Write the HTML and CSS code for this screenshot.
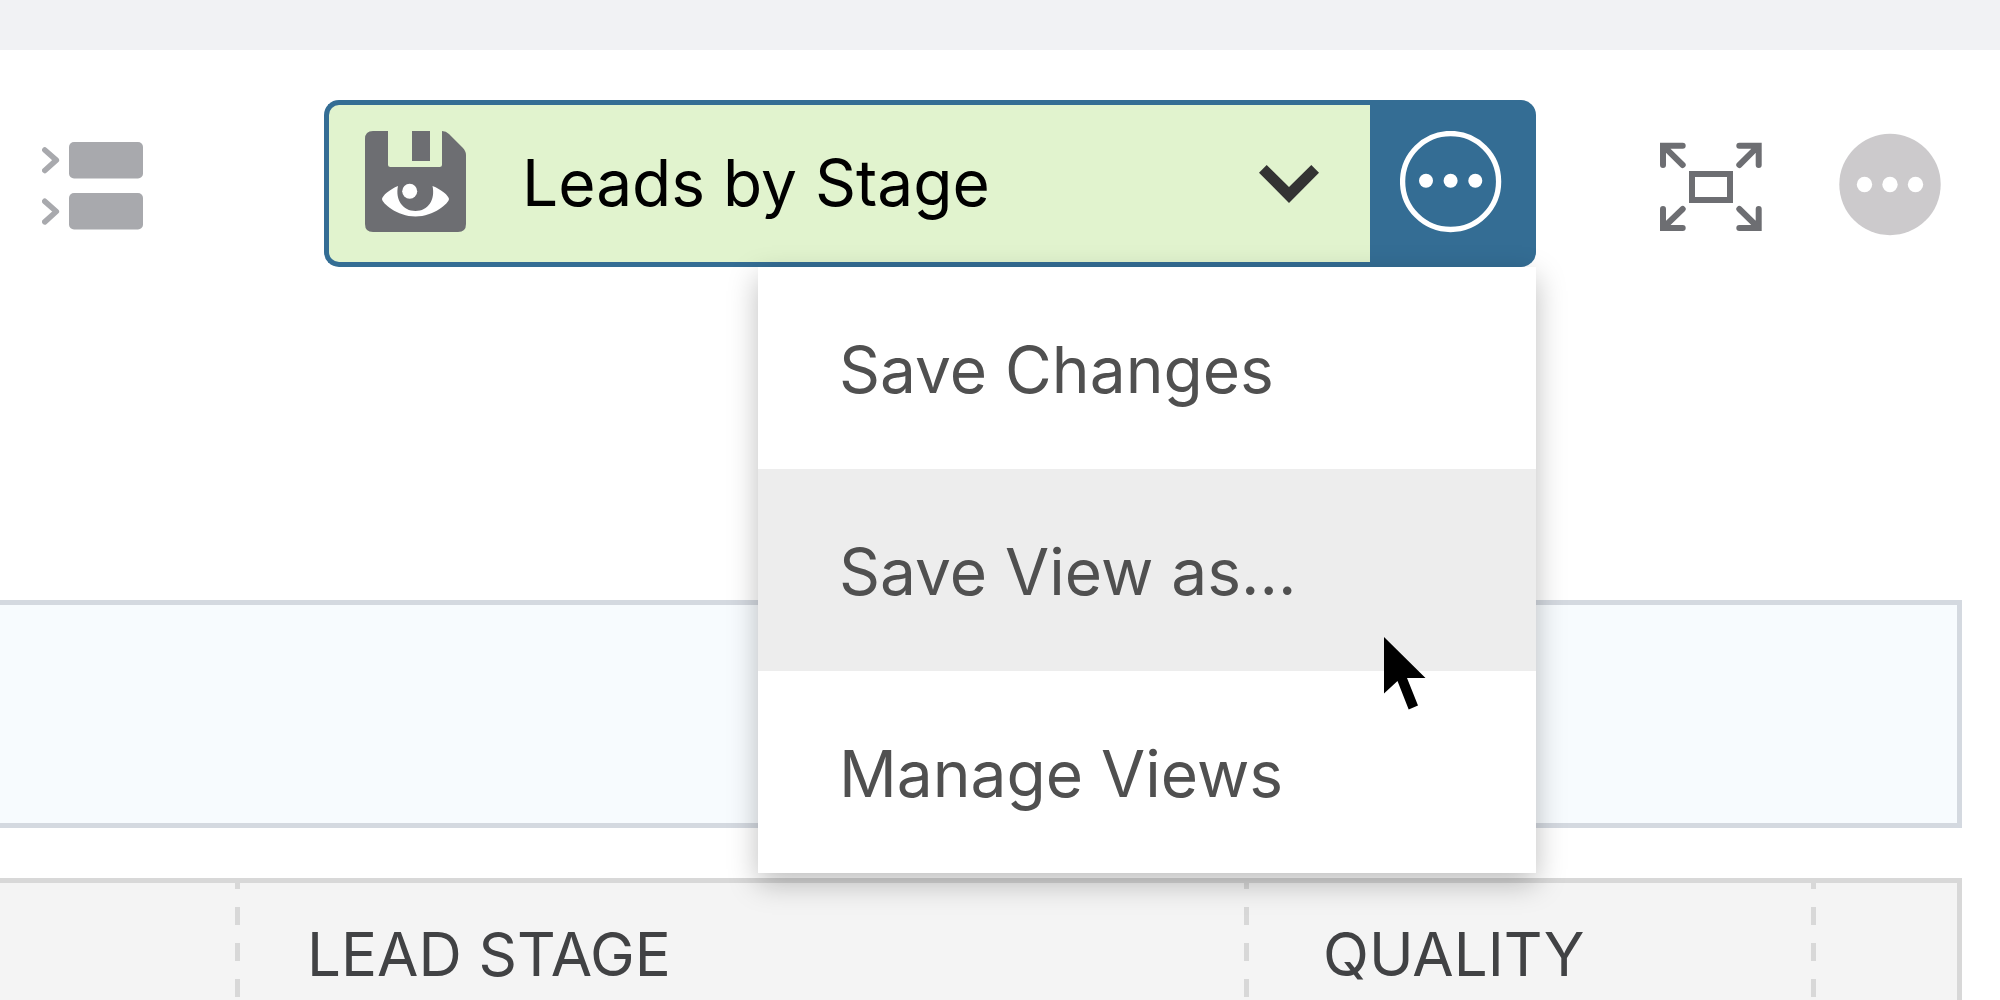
FILE: index.html
```html
<!DOCTYPE html>
<html lang="en">
<head>
<meta charset="utf-8">
<meta name="viewport" content="width=device-width, initial-scale=1">
<title>Leads by Stage</title>
<link rel="stylesheet" href="styles.css">
</head>
<body>
<div class="topbar"></div>
<header class="toolbar">
  <button class="tool" type="button" aria-label="Group rows">
    <svg width="102" height="105" viewBox="0 0 102 105">
      <g fill="#a8a9ad"><rect x="27" y="11" width="74" height="36.5" rx="5"/><rect x="27" y="62" width="74" height="36.5" rx="5"/></g>
      <g fill="none" stroke="#a8a9ad" stroke-width="5.6" stroke-linecap="round" stroke-linejoin="round"><path d="M2.8 19 14.3 29.200 2.800 39.500"/><path d="M2.800 70.300 14.300 80.500 2.800 90.800"/></g>
    </svg>
  </button>
  <div class="view">
    <button class="view-select" type="button" aria-haspopup="listbox">
      <svg width="101" height="106" viewBox="0 0 101 106">
        <path fill="#6d6e72" d="M8 0H23V33.500Q23 36 25.500 36H74.500Q77 36 77 33.500V0Q81 0 84 3L97.500 16.500Q101 20 101 24V93Q101 101 93 101H8Q0 101 0 93V8Q0 0 8 0ZM47 0H65V30H47Z"/>
        <path fill="#fff" d="M33 55C25 58 17 65 17 68C17 72 32 85.500 50.500 85.500S84 72 84 68C84 65 76 58 67.500 55C70.500 69 63 80 50.500 80S30 69 33 55Z"/>
        <circle cx="44.700" cy="60.300" r="7.500" fill="#fff"/>
      </svg>
      <span class="view-name">Leads by Stage</span>
      <svg width="60" height="38" viewBox="0 0 60 38"><path fill="#333" d="M0 7.700 7.700 0 30 22 52.300 0 60 7.700 30 38Z"/></svg>
    </button>
    <button class="view-more" type="button" aria-label="View options" aria-expanded="true">
      <svg width="102" height="106" viewBox="0 0 102 106">
        <circle cx="50.600" cy="50.500" r="48" fill="none" stroke="#fff" stroke-width="5.300"/>
        <g fill="#fff"><circle cx="26" cy="49.700" r="7"/><circle cx="50.600" cy="49.700" r="7"/><circle cx="75.300" cy="49.700" r="7"/></g>
      </svg>
    </button>
    <div class="menu" role="menu">
      <button class="menu-item" type="button" role="menuitem">Save Changes</button>
      <button class="menu-item active" type="button" role="menuitem">Save View as...</button>
      <button class="menu-item" type="button" role="menuitem">Manage Views</button>
      <svg class="cursor" width="42" height="73" viewBox="0 0 42 73"><path d="M0 0V56.500L13.500 44 24.700 72.500 34 68.500 23 41H41.500Z"/></svg>
    </div>
  </div>
  <button class="tool expand" type="button" aria-label="Full screen">
    <svg width="102" height="105" viewBox="0 0 102 105" fill="none" stroke="#6d6e72" stroke-width="6" stroke-linecap="round">
      <path d="M22.700 14.700H3V34M3.500 15.200 22.700 34M79.300 14.700H98.700V34M98.200 15.200 79.300 34M3 78V97H22.700M3.500 96.500 22.700 78M98.700 78V97H79.300M98.200 96.500 79.300 78"/>
      <rect x="32" y="43" width="38" height="26"/>
    </svg>
  </button>
  <button class="tool more" type="button" aria-label="More">
    <svg width="102" height="105" viewBox="0 0 102 105">
      <circle cx="51" cy="53.500" r="50.700" fill="#cccacc"/>
      <g fill="#fff"><circle cx="25.500" cy="53.500" r="7.700"/><circle cx="51" cy="53.500" r="7.700"/><circle cx="76.500" cy="53.500" r="7.700"/></g>
    </svg>
  </button>
</header>
<main class="content">
  <div class="band"></div>
  <table class="leads">
    <colgroup><col class="col-first"><col class="col-stage"><col class="col-quality"><col></colgroup>
    <thead><tr><th></th><th scope="col">LEAD STAGE</th><th class="quality" scope="col">QUALITY</th><th></th></tr></thead>
  </table>
</main>
</body>
</html>
```
FILE: styles.css
```css
* { box-sizing: border-box; }
body {
  margin: 0;
  min-height: 100vh;
  background: #fff;
  font-family: Inter, "Liberation Sans", sans-serif;
}
button {
  margin: 0;
  padding: 0;
  border: 0;
  background: none;
  color: inherit;
  font: inherit;
}
svg { display: block; flex: none; }

.topbar { height: 50px; background: #f1f2f4; }

.toolbar {
  display: flex;
  align-items: center;
  padding: 50px 59px 0 42px;
}
.tool { flex: none; }
.expand { margin-left: 124px; }
.more { margin-left: 77px; }

.view {
  position: relative;
  display: flex;
  flex: 1;
  height: 167px;
  margin-left: 180px;
}
.view-select {
  display: flex;
  flex: 1;
  align-items: center;
  padding: 0 51px 0 36px;
  border: 5px solid #346d94;
  border-right: 0;
  border-radius: 15px 0 0 15px;
  background: #e1f3ce;
  color: #000;
  font-size: 64px;
}
.view-name {
  flex: 1;
  padding: 0 0 2px 56px;
  text-align: left;
  white-space: nowrap;
}
.view-more {
  display: flex;
  align-items: center;
  width: 166px;
  padding-left: 30px;
  border-radius: 0 15px 15px 0;
  background: #346d94;
}

.menu {
  position: absolute;
  top: 100%;
  right: 0;
  width: 778px;
  background: #fff;
  box-shadow: 0 10px 28px rgba(0, 0, 0, 0.26);
}
.menu-item {
  display: block;
  width: 100%;
  height: 202px;
  padding: 2px 81px 0;
  color: #505050;
  font-size: 64px;
  text-align: left;
  white-space: nowrap;
}
.menu-item.active { background: #ededed; }
.cursor { position: absolute; top: 370px; left: 626px; }

.content { padding: 333px 38px 0 0; }
.band {
  height: 228px;
  margin-bottom: 50px;
  border: 5px solid #d4d9e0;
  border-left: 0;
  background: #f7fbfe;
}

.leads {
  width: 100%;
  border: 5px solid #d8d8d8;
  border-width: 5px 5px 0 0;
  border-spacing: 0;
  table-layout: fixed;
  background: #f4f4f4;
}
.col-first { width: 240px; }
.col-stage { width: 1009px; }
.col-quality { width: 567px; }
.leads th {
  height: 117px;
  padding: 29px 0 0 67px;
  color: #414244;
  font-size: 60px;
  font-weight: 400;
  line-height: 84px;
  text-align: left;
  vertical-align: top;
  white-space: nowrap;
}
.leads .quality { padding-left: 74px; }
.leads th:not(:last-child) {
  background: repeating-linear-gradient(#d8d8d8 0 6px, transparent 6px 24px, #d8d8d8 24px 36px) right / 5px 100% no-repeat;
}
```
